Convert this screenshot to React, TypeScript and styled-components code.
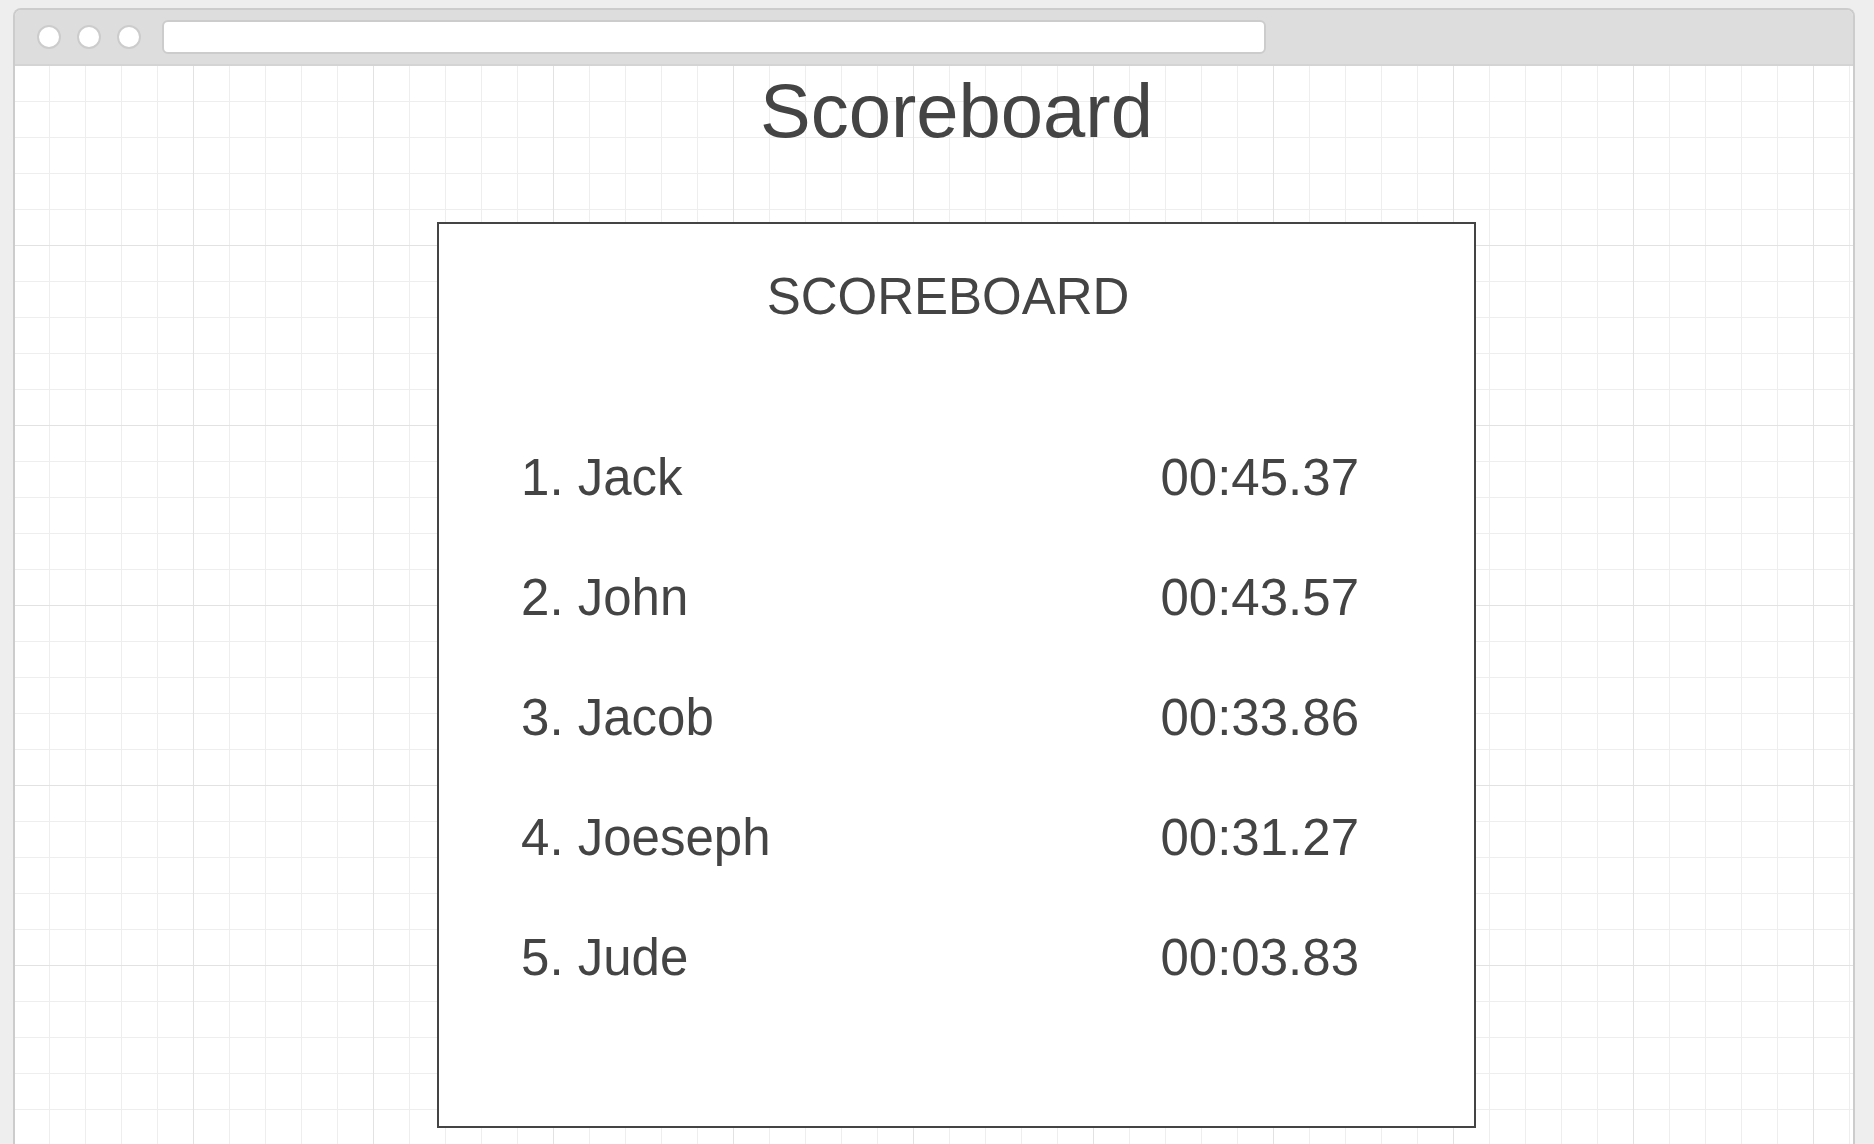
import styled, { createGlobalStyle } from 'styled-components';

const GlobalStyle = createGlobalStyle`
  html, body {
    margin: 0;
    padding: 0;
    height: 100%;
    overflow: hidden;
    background-color: #eeeeee;
    font-family: "Liberation Sans", Arial, sans-serif;
  }
  #root {
    height: 100%;
  }
`;

const Page = styled.div`
  height: 100%;
  padding: 8px 19px 0 13px;
  box-sizing: border-box;
  display: flex;
`;

const Window = styled.div`
  flex: 1;
  display: flex;
  flex-direction: column;
  border: 2px solid #cccccc;
  border-bottom: none;
  border-radius: 8px 8px 0 0;
  overflow: hidden;
`;

const Chrome = styled.div`
  height: 54px;
  flex-shrink: 0;
  display: flex;
  align-items: center;
  gap: 16px;
  padding-left: 22px;
  background-color: #dddddd;
  border-bottom: 2px solid #d4d4d4;
`;

const Dot = styled.div`
  width: 20px;
  height: 20px;
  border-radius: 50%;
  background-color: #ffffff;
  border: 2px solid #cccccc;
`;

const UrlBar = styled.div`
  width: 1100px;
  height: 30px;
  margin-left: 5px;
  background-color: #ffffff;
  border: 2px solid #cccccc;
  border-radius: 6px;
`;

const Canvas = styled.div`
  flex: 1;
  background-color: #ffffff;
  background-image:
    linear-gradient(to right, #e2e2e2 1px, transparent 1px),
    linear-gradient(to bottom, #e2e2e2 1px, transparent 1px),
    linear-gradient(to right, #eeeeee 1px, transparent 1px),
    linear-gradient(to bottom, #eeeeee 1px, transparent 1px);
  background-size: 180px 180px, 180px 180px, 36px 36px, 36px 36px;
  background-position: -2px -1px, -2px -1px, -2px -1px, -2px -1px;
  padding: 2px 0 0 422px;
`;

const Column = styled.div`
  width: 1039px;
  display: flex;
  flex-direction: column;
  color: #444444;
`;

const PageTitle = styled.h1`
  margin: 0;
  font-size: 76px;
  font-weight: normal;
  line-height: 86px;
  text-align: center;
`;

const Card = styled.div`
  margin-top: 68px;
  height: 906px;
  box-sizing: border-box;
  border: 2px solid #444444;
  background-color: #ffffff;
  padding: 44px 115px 0 82px;
  display: flex;
  flex-direction: column;
`;

const CardTitle = styled.h2`
  margin: 0 0 92px;
  padding-left: 16px;
  font-size: 51px;
  font-weight: normal;
  line-height: 58px;
  text-align: center;
`;

const Row = styled.div`
  height: 120px;
  display: flex;
  align-items: center;
  justify-content: space-between;
  font-size: 51px;
  line-height: 58px;
`;

const scores = [
  { name: 'Jack', time: '00:45.37' },
  { name: 'John', time: '00:43.57' },
  { name: 'Jacob', time: '00:33.86' },
  { name: 'Joeseph', time: '00:31.27' },
  { name: 'Jude', time: '00:03.83' },
];

export default function App() {
  return (
    <>
      <GlobalStyle />
      <Page>
        <Window>
          <Chrome>
            <Dot />
            <Dot />
            <Dot />
            <UrlBar />
          </Chrome>
          <Canvas>
            <Column>
              <PageTitle>Scoreboard</PageTitle>
              <Card>
                <CardTitle>SCOREBOARD</CardTitle>
                {scores.map((s, i) => (
                  <Row key={s.name}>
                    <span>
                      {i + 1}. {s.name}
                    </span>
                    <span>{s.time}</span>
                  </Row>
                ))}
              </Card>
            </Column>
          </Canvas>
        </Window>
      </Page>
    </>
  );
}
